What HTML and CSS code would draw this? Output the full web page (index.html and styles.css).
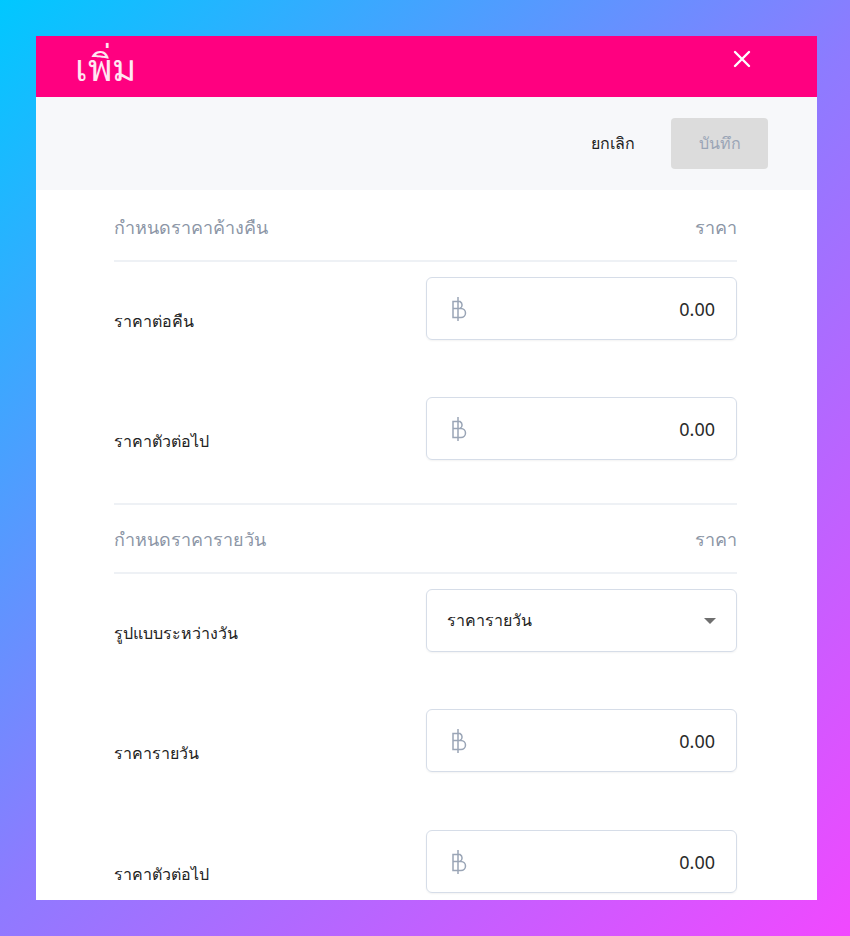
FILE: index.html
```html
<!DOCTYPE html>
<html lang="th">
<head>
<meta charset="utf-8">
<link rel="stylesheet" href="styles.css">
</head>
<body>
<div class="modal">
  <div class="header">
    <h1 class="title">เพิ่ม</h1>
    <button class="close" aria-label="close">
      <svg width="18" height="18" viewBox="0 0 18 18"><path d="M2 2 L16 16 M16 2 L2 16" stroke="#fff" stroke-width="2.4" stroke-linecap="round"/></svg>
    </button>
  </div>
  <div class="toolbar">
    <button class="btn-cancel">ยกเลิก</button>
    <button class="btn-save" disabled>บันทึก</button>
  </div>
  <div class="content">
    <div class="section-head"><span>กำหนดราคาค้างคืน</span><span>ราคา</span></div>
    <div class="row">
      <div class="label">ราคาต่อคืน</div>
      <div class="field"><svg class="baht" width="18" height="26" viewBox="0 0 18 26"><path d="M3 5.5 H10 A4 4 0 0 1 10 12.5 H3 Z M3 12.5 H11 A4.5 4.5 0 0 1 11 21.5 H3 Z M8 1 V25" fill="none" stroke="#9aa5b6" stroke-width="1.5"/></svg><span class="value">0.00</span></div>
    </div>
    <div class="row">
      <div class="label">ราคาตัวต่อไป</div>
      <div class="field"><svg class="baht" width="18" height="26" viewBox="0 0 18 26"><path d="M3 5.5 H10 A4 4 0 0 1 10 12.5 H3 Z M3 12.5 H11 A4.5 4.5 0 0 1 11 21.5 H3 Z M8 1 V25" fill="none" stroke="#9aa5b6" stroke-width="1.5"/></svg><span class="value">0.00</span></div>
    </div>
    <div class="section-head second"><span>กำหนดราคารายวัน</span><span>ราคา</span></div>
    <div class="row">
      <div class="label">รูปแบบระหว่างวัน</div>
      <div class="field select"><span class="sel-text">ราคารายวัน</span><span class="caret"></span></div>
    </div>
    <div class="row">
      <div class="label">ราคารายวัน</div>
      <div class="field"><svg class="baht" width="18" height="26" viewBox="0 0 18 26"><path d="M3 5.5 H10 A4 4 0 0 1 10 12.5 H3 Z M3 12.5 H11 A4.5 4.5 0 0 1 11 21.5 H3 Z M8 1 V25" fill="none" stroke="#9aa5b6" stroke-width="1.5"/></svg><span class="value">0.00</span></div>
    </div>
    <div class="row">
      <div class="label">ราคาตัวต่อไป</div>
      <div class="field"><svg class="baht" width="18" height="26" viewBox="0 0 18 26"><path d="M3 5.5 H10 A4 4 0 0 1 10 12.5 H3 Z M3 12.5 H11 A4.5 4.5 0 0 1 11 21.5 H3 Z M8 1 V25" fill="none" stroke="#9aa5b6" stroke-width="1.5"/></svg><span class="value">0.00</span></div>
    </div>
  </div>
</div>
</body>
</html>
```
FILE: styles.css
```css
* { box-sizing: border-box; }
html, body { margin: 0; height: 100%; }
body {
  width: 850px;
  height: 936px;
  overflow: hidden;
  background: linear-gradient(135deg, #00c8ff 0%, #8d7bff 50%, #f148ff 100%);
  font-family: "Noto Sans", "DejaVu Sans", sans-serif;
  padding: 36px 33px 36px 36px;
}
.modal {
  width: 781px;
  height: 864px;
  background: #fff;
  overflow: hidden;
}
.header {
  height: 61px;
  background: #ff0080;
  display: flex;
  align-items: center;
  justify-content: space-between;
  padding: 0 66px 0 39px;
}
.title {
  margin: 0;
  color: #ffe6f2;
  font-size: 37px;
  font-weight: 400;
  line-height: 1;
  padding-top: 0;
}
.close {
  background: none;
  border: 0;
  padding: 0;
  display: flex;
  margin-top: -16px;
}
.toolbar {
  height: 93px;
  background: #f7f8fa;
  display: flex;
  align-items: center;
  justify-content: flex-end;
  padding: 0 49px 0 0;
  gap: 36px;
}
.btn-cancel {
  background: none;
  border: 0;
  font: inherit;
  font-size: 16px;
  color: #222;
  padding: 0;
}
.btn-save {
  width: 97px;
  height: 51px;
  border: 0;
  border-radius: 4px;
  background: #dcdcdc;
  color: #9aa5b6;
  font: inherit;
  font-size: 16px;
}
.content {
  padding: 0 80px 0 78px;
}
.section-head {
  display: flex;
  justify-content: space-between;
  align-items: center;
  height: 72px;
  padding-top: 4px;
  border-bottom: 2px solid #eef1f5;
  color: #8c96a6;
  font-size: 18px;
}
.section-head.second {
  border-top: 2px solid #eef1f5;
  height: 71px;
  padding-top: 2px;
}
.row {
  display: flex;
  justify-content: space-between;
  align-items: flex-start;
  padding-top: 15px;
  height: 120px;
}
.section-head + .row + .row { height: 121px; }
.label {
  font-size: 16px;
  color: #222;
  padding-top: 32px;
}
.field {
  width: 311px;
  height: 63px;
  border: 1.5px solid #d6dde8;
  border-radius: 6px;
  display: flex;
  align-items: center;
  justify-content: space-between;
  padding: 0 21px 0 23px;
  box-shadow: 0 1px 2px rgba(0,0,0,0.05);
}
.baht { display: block; }
.value {
  color: #2a2a2a;
  font-size: 18px;
  font-weight: 400;
}
.select { padding: 0 20px; }
.sel-text { font-size: 16px; color: #222; }
.caret {
  width: 0; height: 0;
  border-left: 6px solid transparent;
  border-right: 6px solid transparent;
  border-top: 6px solid #6f6f6f;
}
```
